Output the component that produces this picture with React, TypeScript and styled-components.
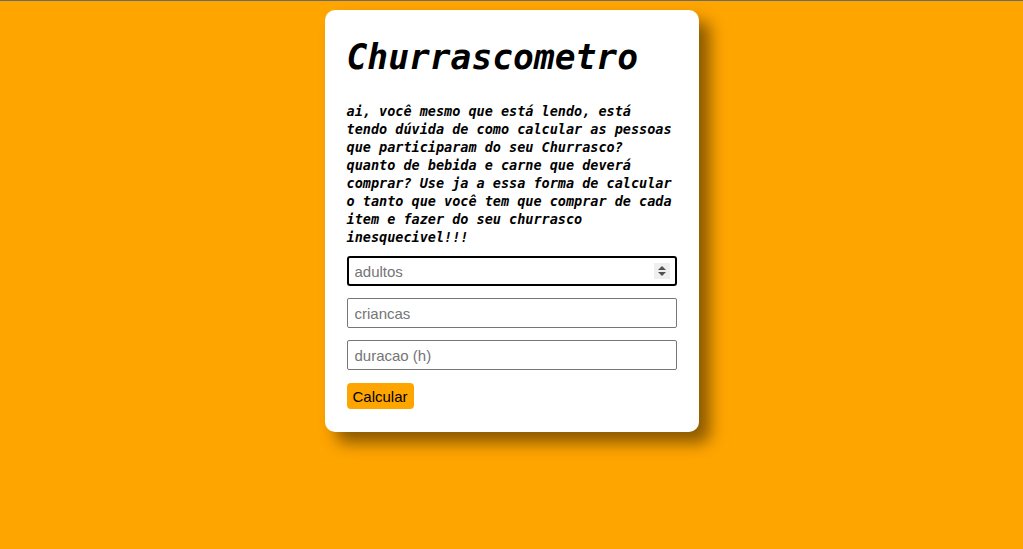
import React from "react";
import styled, { createGlobalStyle } from "styled-components";

const Global = createGlobalStyle`
  html, body { margin: 0; padding: 0; }
  body {
    background: #ffa500;
    border-top: 1px solid #6b6b6b;
    min-height: 548px;
    font-family: "Liberation Sans", Arial, sans-serif;
  }
`;

const Page = styled.main`
  display: flex;
  justify-content: center;
  padding-top: 9px;
`;

const Card = styled.section`
  width: 331px;
  padding: 22px 21px 23px 22px;
  background: #ffffff;
  border-radius: 10px;
  box-shadow: 11px 11px 16px rgba(0, 0, 0, 0.46);
  display: flex;
  flex-direction: column;
`;

const Title = styled.h1`
  margin: 5px 0 0 0;
  font-family: "DejaVu Sans Mono", monospace;
  font-style: italic;
  font-weight: bold;
  font-size: 34.6px;
  line-height: 40px;
  color: #000;
`;

const Intro = styled.p`
  margin: 25px 0 10px 0;
  font-family: "DejaVu Sans Mono", monospace;
  font-style: italic;
  font-weight: bold;
  font-size: 13.5px;
  line-height: 18px;
  color: #000;
`;

const Form = styled.div`
  display: flex;
  flex-direction: column;
  gap: 12px;
  align-items: flex-start;
`;

const Field = styled.div`
  position: relative;
  width: 100%;
`;

const Input = styled.input<{ $focused?: boolean }>`
  box-sizing: border-box;
  width: 330px;
  height: 30px;
  margin: 0;
  padding: 0 ${(p) => (p.$focused ? 6 : 7)}px;
  border: ${(p) => (p.$focused ? "2px solid #000" : "1px solid #767676")};
  border-radius: ${(p) => (p.$focused ? 3 : 2)}px;
  font-family: "Liberation Sans", Arial, sans-serif;
  font-size: 15px;
  color: #000;
  background: #fff;
  outline: none;
  &::placeholder { color: #757575; }
  &::-webkit-inner-spin-button,
  &::-webkit-outer-spin-button { -webkit-appearance: none; margin: 0; }
  -moz-appearance: textfield;
`;

const Spinner = styled.span`
  position: absolute;
  right: 8px;
  top: 7px;
  width: 16px;
  height: 16px;
  background: #efefef;
  display: flex;
  align-items: center;
  justify-content: center;
`;

const Button = styled.button`
  margin-top: 1px;
  height: 26px;
  padding: 0 6px;
  border: none;
  border-radius: 4px;
  background: #ffa500;
  color: #000;
  font-family: "Liberation Sans", Arial, sans-serif;
  font-size: 15px;
  cursor: pointer;
`;

export default function App() {
  return (
    <>
      <Global />
      <Page>
        <Card>
          <Title>Churrascometro</Title>
          <Intro>
            ai, você mesmo que está lendo, está tendo dúvida de como calcular as
            pessoas que participaram do seu Churrasco? quanto de bebida e carne
            que deverá comprar? Use ja a essa forma de calcular o tanto que você
            tem que comprar de cada item e fazer do seu churrasco inesquecivel!!!
          </Intro>
          <Form>
            <Field>
              <Input type="number" placeholder="adultos" $focused />
              <Spinner>
                <svg width="10" height="12" viewBox="0 0 10 12">
                  <path d="M1 5 L5 1 L9 5 Z" fill="#505050" />
                  <path d="M1 7 L5 11 L9 7 Z" fill="#505050" />
                </svg>
              </Spinner>
            </Field>
            <Field>
              <Input type="number" placeholder="criancas" />
            </Field>
            <Field>
              <Input type="number" placeholder="duracao (h)" />
            </Field>
            <Button>Calcular</Button>
          </Form>
        </Card>
      </Page>
    </>
  );
}
